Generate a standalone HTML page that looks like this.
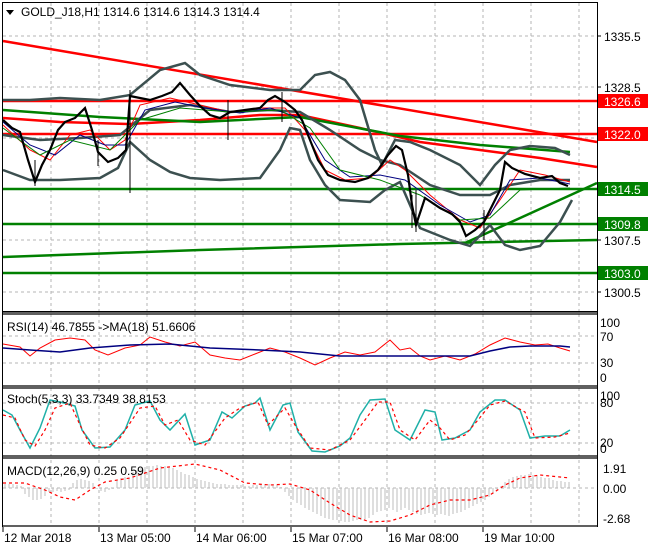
<!DOCTYPE html>
<html><head><meta charset="utf-8"><style>
html,body{margin:0;padding:0;background:#fff;width:650px;height:550px;overflow:hidden}
svg{display:block;font-family:"Liberation Sans",sans-serif}
</style></head><body>
<svg width="650" height="550" viewBox="0 0 650 550" xmlns="http://www.w3.org/2000/svg">
<rect width="650" height="550" fill="#fff"/>
<g stroke="#b4b4b4" stroke-dasharray="3,3" stroke-width="1">
<path d="M51 3V311M99 3V311M147 3V311M195 3V311M243 3V311M291 3V311M339 3V311M387 3V311M435 3V311M483 3V311M531 3V311M579 3V311"/>
<path d="M51 314V384M99 314V384M147 314V384M195 314V384M243 314V384M291 314V384M339 314V384M387 314V384M435 314V384M483 314V384M531 314V384M579 314V384"/>
<path d="M51 388V456M99 388V456M147 388V456M195 388V456M243 388V456M291 388V456M339 388V456M387 388V456M435 388V456M483 388V456M531 388V456M579 388V456"/>
<path d="M51 460V526M99 460V526M147 460V526M195 460V526M243 460V526M291 460V526M339 460V526M387 460V526M435 460V526M483 460V526M531 460V526M579 460V526"/>
<path d="M3 36H597M3 87H597M3 138H597M3 189H597M3 240H597M3 292H597"/>
<path d="M3 336H597M3 363H597M3 403H597M3 443H597M3 488H597"/>
</g>
<g stroke-width="2.5">
<path d="M3 101H597M3 134H597" stroke="#ff0000"/>
<path d="M3 189H597M3 224H597M3 273H597" stroke="#008000"/>
</g>
<path d="M3 41L597 142" stroke="#ff0000" stroke-width="2.5" fill="none"/>
<path d="M3 118L60 122L130 124L200 120L260 115L300 115L360 128L420 142L480 150L540 158L597 167" stroke="#ff0000" stroke-width="2.5" fill="none"/>
<path d="M3 110L100 117L200 122L300 117L400 136L480 145L570 152" stroke="#008000" stroke-width="2.5" fill="none"/>
<path d="M3 257L200 250L400 244L597 240" stroke="#008000" stroke-width="2.5" fill="none"/>
<path d="M465 243L597 183" stroke="#008000" stroke-width="2.5" fill="none"/>
<g stroke="#3c5050" stroke-width="2.5" fill="none">
<path d="M3 100L30 100L60 98L100 100L130 95L160 70L185 63L200 75L230 85L270 90L300 90L315 75L330 72L345 80L360 100L375 150L382 165L395 140L410 142L430 150L460 165L480 185L495 165L510 150L530 146L555 148L570 155"/>
<path d="M3 170L30 180L60 180L100 178L118 168L130 142L150 160L170 172L190 178L220 180L260 178L280 150L290 128L300 130L310 160L325 185L340 200L370 202L385 190L400 182L420 228L450 240L470 246L490 225L505 245L520 250L540 246L560 222L572 200"/>
<path d="M3 135L40 140L80 138L120 135L150 110L190 105L230 112L270 110L300 112L330 130L360 150L380 160L400 165L430 185L460 195L490 195L510 185L540 180L570 180"/>
</g>
<path d="M3 125L30 150L50 160L70 135L90 130L110 150L125 140L140 105L170 98L200 105L230 112L260 108L285 108L305 130L325 170L345 180L370 178L390 160L405 170L430 195L460 220L480 228L500 200L520 170L545 175L570 182" stroke="#ff0000" stroke-width="1" fill="none"/>
<path d="M3 122L30 145L55 155L80 135L105 145L125 145L145 110L175 102L205 108L240 113L270 108L300 118L325 160L350 177L380 175L405 180L440 205L470 222L490 215L510 180L540 178L570 184" stroke="#000080" stroke-width="1" fill="none"/>
<path d="M3 128L40 155L70 140L110 150L140 120L180 108L230 112L280 110L310 128L340 170L380 180L420 195L460 220L490 218L520 190L570 188" stroke="#008000" stroke-width="1" fill="none"/>
<path d="M3 120L12 128L20 132L28 160L35 182L42 165L50 150L58 130L65 122L75 118L85 108L92 130L98 152L108 162L118 158L126 150L130 96L140 98L150 100L162 96L172 92L180 83L190 95L200 106L210 115L220 118L230 112L245 110L260 108L268 100L275 96L285 102L295 110L302 120L310 140L318 160L328 175L340 180L355 182L368 178L378 170L388 155L396 146L402 150L408 175L412 205L416 225L425 198L440 208L452 214L460 222L466 236L475 230L484 222L492 206L500 190L505 162L512 168L525 174L540 178L552 176L560 183L568 186" stroke="#000" stroke-width="2.2" fill="none"/>
<path d="M130 90V193M228 100V140M282 92V122M416 190V232M484 210V240M35 160V186M98 140V166M412 195V228" stroke="#000" stroke-width="1"/>
<path d="M3 344L20 347L30 356L40 348L55 340L70 338L85 340L95 350L108 355L125 348L140 345L150 337L165 342L180 346L195 342L210 355L225 358L240 360L255 354L270 348L285 352L300 358L315 365L330 358L345 352L360 355L375 352L390 340L400 350L410 348L420 356L430 360L445 356L460 360L475 354L490 345L505 338L520 342L535 345L548 344L560 348L570 351" stroke="#ff0000" stroke-width="1" fill="none"/>
<path d="M3 348L30 350L60 352L90 348L130 345L170 344L210 348L260 350L300 352L340 356L380 356L420 356L450 356L470 356L490 351L510 347L530 346L560 346L570 347" stroke="#000080" stroke-width="1.5" fill="none"/>
<path d="M3 410L12 415L20 430L30 448L40 428L50 400L60 402L75 406L82 430L95 448L110 447L125 430L135 405L150 401L160 420L170 430L185 414L195 445L210 440L222 412L232 418L245 406L255 403L260 398L270 430L283 405L290 403L298 432L312 451L325 452L340 446L350 438L360 415L370 400L385 399L395 430L410 440L425 410L435 412L442 440L455 438L470 430L480 412L495 400L505 400L520 410L530 438L545 436L560 436L570 430" stroke="#20b0a8" stroke-width="1.5" fill="none"/>
<path d="M3 415L15 418L25 440L35 446L45 430L55 408L70 403L80 425L90 445L105 448L120 438L140 408L155 406L165 425L178 420L190 440L205 445L225 418L240 408L258 402L268 425L285 408L295 425L310 448L330 450L350 440L365 420L378 402L390 402L400 430L415 440L430 420L440 428L450 440L465 435L478 420L490 405L505 401L525 412L535 438L555 437L570 433" stroke="#ff0000" stroke-width="1.2" stroke-dasharray="3,3" fill="none"/>
<path stroke="#bdbdbd" stroke-width="1" fill="none" d="M5 488V484M9 488V484M13 488V484M17 488V485M21 488V486M25 488V494M29 488V497M33 488V500M37 488V500M41 488V499M45 488V496M49 488V492M53 488V492M57 488V491M61 488V492M65 488V491M69 488V490M73 488V483M77 488V480M81 488V479M85 488V480M89 488V481M93 488V483M97 488V489M101 488V491M105 488V492M109 488V490M113 488V489M117 488V480M121 488V478M125 488V477M129 488V478M133 488V472M137 488V470M141 488V468M145 488V467M149 488V466M153 488V466M157 488V465M161 488V466M165 488V466M169 488V467M173 488V468M177 488V470M181 488V472M185 488V474M189 488V475M193 488V477M197 488V479M201 488V480M205 488V481M209 488V482M213 488V483M217 488V484M221 488V484M225 488V484M229 488V485M233 488V485M237 488V485M241 488V485M245 488V486M249 488V486M253 488V485M257 488V485M261 488V484M265 488V484M269 488V484M273 488V485M277 488V485M281 488V487M285 488V492M289 488V496M293 488V500M297 488V503M301 488V505M305 488V508M309 488V510M313 488V512M317 488V514M321 488V516M325 488V518M329 488V519M333 488V520M337 488V520M341 488V521M345 488V522M349 488V522M353 488V521M357 488V520M361 488V520M365 488V519M369 488V518M373 488V515M377 488V512M381 488V511M385 488V510M389 488V508M393 488V510M397 488V512M401 488V510M405 488V508M409 488V510M413 488V512M417 488V514M421 488V515M425 488V514M429 488V513M433 488V514M437 488V515M441 488V514M445 488V515M449 488V516M453 488V514M457 488V513M461 488V512M465 488V510M469 488V508M473 488V506M477 488V504M481 488V502M485 488V500M489 488V497M493 488V494M497 488V490M501 488V486M505 488V482M509 488V479M513 488V477M517 488V476M521 488V475M525 488V475M529 488V474M533 488V475M537 488V476M541 488V477M545 488V478M549 488V478M553 488V480M557 488V481M561 488V481M565 488V482M569 488V482"/>
<path d="M3 483L25 483L45 490L60 497L75 500L90 490L105 482L130 478L160 468L195 464L220 470L245 483L270 485L290 484L310 490L330 503L350 515L370 522L390 521L410 515L430 505L450 500L470 500L490 495L505 485L520 478L540 475L560 477L570 478" stroke="#ff0000" stroke-width="1.2" stroke-dasharray="3,3" fill="none"/>
<g stroke="#000" fill="none">
<rect x="2.5" y="2.5" width="595" height="309" stroke-width="1"/>
<path d="M2 312H598M2 314H598M2 386H598M2 388H598M2 456H598M2 458H598M2 526H598" stroke-width="1.2"/>
<path d="M2.5 312V527M597.5 312V527" stroke-width="1"/>
<path d="M597 36h4M597 87h4M597 138h4M597 189h4M597 240h4M597 292h4M3 527v5M99 527v5M195 527v5M291 527v5M387 527v5M483 527v5"/>
</g>
<path d="M6 10h8l-4 5z" fill="#000"/>
<text x="21" y="16" font-size="12" fill="#000">GOLD_J18,H1  1314.6 1314.6 1314.3 1314.4</text>
<text x="7" y="331" font-size="12">RSI(14) 46.7855  -&gt;MA(18) 51.6606</text>
<text x="7" y="403" font-size="12">Stoch(5,3,3) 33.7349 38.8153</text>
<text x="7" y="475" font-size="12">MACD(12,26,9) 0.25 0.59</text>
<g font-size="12" fill="#000">
<text x="604" y="41">1335.5</text>
<text x="604" y="92">1328.5</text>
<text x="604" y="245">1307.5</text>
<text x="604" y="297">1300.5</text>
<text x="600" y="327">100</text><text x="600" y="341">70</text><text x="600" y="367">30</text><text x="600" y="382">0</text>
<text x="600" y="400">100</text><text x="600" y="407">80</text><text x="600" y="447">20</text><text x="600" y="453">0</text>
<text x="603" y="473">1.91</text><text x="603" y="493">0.00</text><text x="603" y="523">-2.68</text>
</g>
<rect x="598" y="94" width="50" height="14" fill="#ff0000"/><text x="604" y="106" font-size="12" fill="#fff">1326.6</text>
<rect x="598" y="127" width="50" height="14" fill="#ff0000"/><text x="604" y="139" font-size="12" fill="#fff">1322.0</text>
<rect x="598" y="182" width="50" height="14" fill="#008000"/><text x="604" y="194" font-size="12" fill="#fff">1314.5</text>
<rect x="598" y="217" width="50" height="14" fill="#008000"/><text x="604" y="229" font-size="12" fill="#fff">1309.8</text>
<rect x="598" y="266" width="50" height="14" fill="#008000"/><text x="604" y="278" font-size="12" fill="#fff">1303.0</text>
<g font-size="12">
<text x="4" y="542">12 Mar 2018</text>
<text x="100" y="542">13 Mar 05:00</text>
<text x="196" y="542">14 Mar 06:00</text>
<text x="292" y="542">15 Mar 07:00</text>
<text x="388" y="542">16 Mar 08:00</text>
<text x="484" y="542">19 Mar 10:00</text>
</g>
</svg>
</body></html>
